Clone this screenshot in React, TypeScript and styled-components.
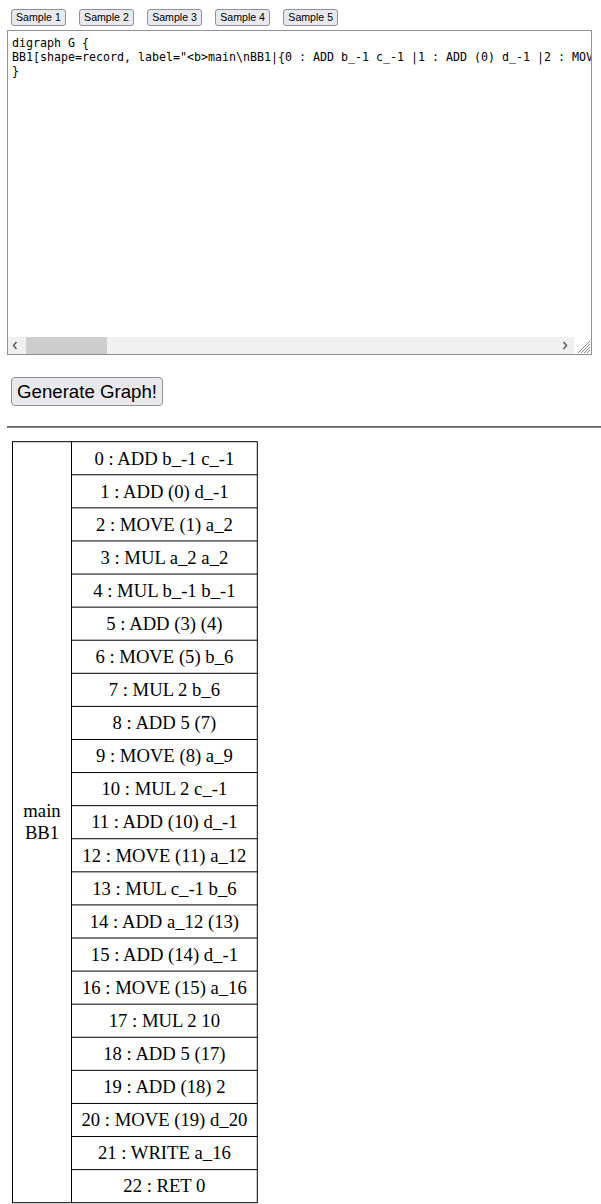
import React from "react";
import styled, { createGlobalStyle } from "styled-components";

const GlobalStyle = createGlobalStyle`
  html, body { margin: 0; padding: 0; background: #ffffff; }
  body { font-family: "Liberation Serif", serif; overflow: hidden; }
`;

const Page = styled.div`
  padding-left: 7px;
  width: 594px;
`;

const Toolbar = styled.div`
  display: flex;
  gap: 13.3px;
  padding: 9px 0 0 4px;
`;

const SampleButton = styled.button`
  font-family: "Liberation Sans", Arial, sans-serif;
  font-size: 10.6px;
  line-height: 15px;
  height: 17px;
  padding: 0 4px;
  color: #000;
  background: #e9e9ed;
  border: 1px solid #8f8f9d;
  border-radius: 3px;
  cursor: pointer;
`;

const EditorFrame = styled.div`
  margin-top: 4px;
  width: 583px;
  border: 1px solid #8f8f9d;
  display: flex;
  flex-direction: column;
  background: #fff;
`;

const Editor = styled.textarea`
  display: block;
  height: 306px;
  box-sizing: border-box;
  margin: 0;
  padding: 5px 4px 0 4px;
  border: 0;
  outline: none;
  resize: none;
  overflow: hidden;
  white-space: pre;
  font-family: "DejaVu Sans Mono", "Liberation Mono", monospace;
  font-size: 11.63px;
  line-height: 14px;
  color: #000;
  background: #fff;
`;

const ScrollBar = styled.div`
  display: flex;
  height: 17px;
`;

const ArrowButton = styled.div`
  width: 17px;
  height: 17px;
  flex: none;
  background: #f0f0f0;
  display: flex;
  align-items: center;
  justify-content: center;
`;

const Track = styled.div`
  flex: 1;
  background: #f0f0f0;
  display: flex;
  align-items: stretch;
  padding-left: 1px;
`;

const Thumb = styled.div`
  width: 81px;
  background: #cdcdcd;
`;

const Grip = styled.div`
  width: 17px;
  height: 17px;
  flex: none;
  background: #fff;
`;

const GenerateButton = styled.button`
  display: block;
  margin: 22px 0 0 4px;
  font-family: "Liberation Sans", Arial, sans-serif;
  font-size: 18.67px;
  line-height: 21px;
  padding: 3px 5px;
  color: #000;
  background: #e9e9ed;
  border: 1px solid #8f8f9d;
  border-radius: 4px;
  cursor: pointer;
`;

const Rule = styled.hr`
  margin: 20px 0 0 0;
  border: 0;
  border-top: 1px solid #5f5f5f;
  border-bottom: 1px solid #8a8a8a;
  height: 0;
`;

const GraphCanvas = styled.svg`
  display: block;
  margin-left: -7px;
`;

const instructions = [
  "0 : ADD b_-1 c_-1",
  "1 : ADD (0) d_-1",
  "2 : MOVE (1) a_2",
  "3 : MUL a_2 a_2",
  "4 : MUL b_-1 b_-1",
  "5 : ADD (3) (4)",
  "6 : MOVE (5) b_6",
  "7 : MUL 2 b_6",
  "8 : ADD 5 (7)",
  "9 : MOVE (8) a_9",
  "10 : MUL 2 c_-1",
  "11 : ADD (10) d_-1",
  "12 : MOVE (11) a_12",
  "13 : MUL c_-1 b_6",
  "14 : ADD a_12 (13)",
  "15 : ADD (14) d_-1",
  "16 : MOVE (15) a_16",
  "17 : MUL 2 10",
  "18 : ADD 5 (17)",
  "19 : ADD (18) 2",
  "20 : MOVE (19) d_20",
  "21 : WRITE a_16",
  "22 : RET 0",
];

const source =
  "digraph G {\n" +
  'BB1[shape=record, label="<b>main\\nBB1|{' +
  instructions.map((s) => s + " ").join("|") +
  '}"];\n' +
  "}";

const ChevronLeft = () => (
  <svg width="17" height="17" viewBox="0 0 17 17">
    <polyline points="8.5,5 5.5,8.5 8.5,12" fill="none" stroke="#606060" strokeWidth="1.6" />
  </svg>
);

const ChevronRight = () => (
  <svg width="17" height="17" viewBox="0 0 17 17">
    <polyline points="6.5,5 9.5,8.5 6.5,12" fill="none" stroke="#606060" strokeWidth="1.6" />
  </svg>
);

const ResizeGrip = () => (
  <svg width="17" height="17" viewBox="0 0 17 17">
    <g stroke="#8a8a8a" strokeWidth="1">
      <line x1="4" y1="16" x2="16" y2="4" />
      <line x1="7" y1="16" x2="16" y2="7" />
      <line x1="10" y1="16" x2="16" y2="10" />
      <line x1="13" y1="16" x2="16" y2="13" />
    </g>
  </svg>
);

const TOP = 13.7; // 440.7 page y minus 427 canvas top
const LEFT = 12.5;
const RIGHT = 257.3;
const DIVIDER = 71.5;
const ROW = 33.087;

const RecordNode = () => {
  const bottom = TOP + ROW * instructions.length;
  const mid = (TOP + bottom) / 2;
  return (
    <GraphCanvas width="601" height="777" viewBox="0 0 601 777">
      <g fontFamily="'Liberation Serif', 'Times New Roman', serif" fontSize="18.67" fill="#000">
        <rect x={LEFT} y={TOP} width={RIGHT - LEFT} height={bottom - TOP} fill="none" stroke="#000" strokeWidth="1" />
        <line x1={DIVIDER} y1={TOP} x2={DIVIDER} y2={bottom} stroke="#000" strokeWidth="1" />
        <text x={(LEFT + DIVIDER) / 2} y={mid - 5.6} textAnchor="middle">main</text>
        <text x={(LEFT + DIVIDER) / 2} y={mid + 16.8} textAnchor="middle">BB1</text>
        {instructions.map((ins, i) => (
          <g key={ins}>
            {i > 0 && (
              <line x1={DIVIDER} y1={TOP + ROW * i} x2={RIGHT} y2={TOP + ROW * i} stroke="#000" strokeWidth="1" />
            )}
            <text x={(DIVIDER + RIGHT) / 2} y={TOP + ROW * i + 22.8} textAnchor="middle">
              {ins}
            </text>
          </g>
        ))}
      </g>
    </GraphCanvas>
  );
};

export default function App() {
  return (
    <>
      <GlobalStyle />
      <Page>
        <Toolbar>
          {[1, 2, 3, 4, 5].map((n) => (
            <SampleButton key={n}>Sample {n}</SampleButton>
          ))}
        </Toolbar>
        <EditorFrame>
          <Editor defaultValue={source} spellCheck={false} wrap="off" />
          <ScrollBar>
            <ArrowButton>
              <ChevronLeft />
            </ArrowButton>
            <Track>
              <Thumb />
            </Track>
            <ArrowButton>
              <ChevronRight />
            </ArrowButton>
            <Grip>
              <ResizeGrip />
            </Grip>
          </ScrollBar>
        </EditorFrame>
        <GenerateButton>Generate Graph!</GenerateButton>
        <Rule />
        <RecordNode />
      </Page>
    </>
  );
}
